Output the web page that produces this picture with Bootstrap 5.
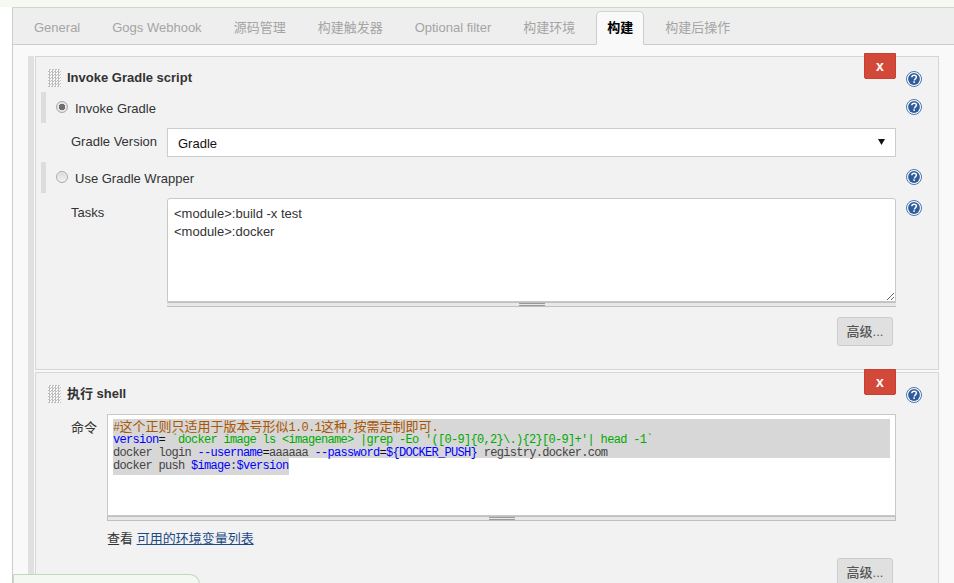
<!DOCTYPE html>
<html lang="zh">
<head>
<meta charset="utf-8">
<title>Jenkins 构建</title>
<link rel="stylesheet" href="https://cdn.jsdelivr.net/npm/bootstrap@5.3.0/dist/css/bootstrap.min.css">
<style>
html,body{height:583px;overflow:hidden}
body{background:#fff;font:13px/16px "Liberation Sans","Noto Sans CJK SC",sans-serif;color:#333;position:relative}
.top-strip{height:7px;background:#f6f9f1;border-bottom:0}
.cfg-main{margin-left:12px;border-left:1px solid #ccc;border-top:1px solid #d4d4d4;background:#f9f9f9;height:576px;overflow:hidden}
.cfg-tabs.nav-tabs{background:#eee;height:37px;padding:3px 0 0 10px;gap:10px;border-bottom:1px solid #ccc;--bs-nav-tabs-border-color:#ccc}
.cfg-tabs .nav-link{padding:0 10px;height:34px;line-height:31px;color:#a5a5a5;font-size:13px;border:1px solid transparent;border-radius:5px 5px 0 0;margin-bottom:-1px}
.cfg-tabs .nav-link.active{background:#f9f9f9;color:#000;font-weight:700;border-color:#d4d4d4 #ccc #f9f9f9}
.cfg-wrap{margin:11px 15px 0 15px;border-left:6px solid #e0e0e0;padding-left:1px}
.cfg-panel{background:#f2f2f2;border:1px solid #d6d6d6;position:relative}
.cfg-panel+.cfg-panel{margin-top:2px}
.panel-one{height:314px}
.panel-two{height:260px}
.head-row{height:35px;padding:12px 16px 0 12px}
.panel-two .head-row{height:41px;padding-top:12px}
.drag-grip{width:13px;height:18px;flex:none;background:repeating-conic-gradient(#bdbdbd 0 25%,#fbfbfb 0 50%) 0 0/3px 3px;margin-right:6px}
.head-title{font-weight:700;color:#333;line-height:17px}
.help-ico{width:16px;height:16px;flex:none;display:block}
.head-row .help-ico{margin-top:2px}
.radio-row .help-ico{margin-bottom:2px}
.radio-row{height:31px;margin-left:5px;border-left:5px solid #ddd;padding:0 16px 0 10px}
.radio-text{padding-top:2px}
.cfg-radio.form-check-input{width:12px;height:12px;margin:0 7px 2px 0;flex:none;background:linear-gradient(#d8d8d8,#f4f4f4);border:1px solid #a9a9a9;box-shadow:inset 0 0 0 1px #eee}
.cfg-radio.form-check-input:checked{background:#e4e4e4;border-color:#a9a9a9;box-shadow:none;background-image:radial-gradient(circle,#6f6f6f 0 3px,#e6e6e6 3.5px)}
.field-row{padding:0 16px 0 35px}
.field-label{width:96px;flex:none;color:#333}
.sel-row{height:39px;padding-top:5px}
.cfg-select.form-select{width:729px;height:29px;padding:2px 0 0 10px;font-size:13px;line-height:25px;color:#111;border:1px solid #ccc;border-radius:0;background-color:#fff;background-image:url("data:image/svg+xml,%3Csvg xmlns='http://www.w3.org/2000/svg' width='8' height='6'%3E%3Cpath d='M0 0h7l-3.500 6z' fill='%23111'/%3E%3C/svg%3E");background-position:right 9px top 10px;background-size:8px 6px;box-shadow:none}
.sel-row .field-label{padding-top:6px}
.task-row{padding-top:5px;height:114px}
.task-row .field-label{padding-top:7px}
.box-col{width:729px;flex:none}
.task-area.form-control{display:block;height:104px;padding:6px;font-size:13px;line-height:18px;color:#333;border:1px solid #c8c8c8;border-radius:3px 3px 0 0;background:#fff;box-shadow:none}
.drag-bar{height:5px;background:#e8e8e8;border:1px solid #c0c0c0;border-top-width:1px;position:relative}
.drag-bar::after{content:"";display:block;width:26px;height:3px;margin:0 auto;border-top:1px solid #999;border-bottom:1px solid #999}
.task-bar{border-left:0;border-right:0}
.task-help{margin:2px 0 0 10px}
.adv-btn.btn{width:56px;height:29px;padding:0;font-size:13px;line-height:27px;color:#555;font-weight:500;background:#e0e0e0;border:1px solid #ccc;border-radius:3px}
.adv-row{padding:10px 45px 0 0}
.kill-btn.btn{position:absolute;right:42px;top:-4px;width:32px;height:26px;padding:0;font-size:14px;line-height:21px;font-weight:700;color:#fff;background:#d24939;border:1px solid #c8402f;border-radius:0 0 2px 2px}
.shell-row{padding:0 16px 0 35px}
.shell-label{width:36px;flex:none;padding-top:6px}
.shell-col{width:789px;flex:none}
.code-box{height:102px;background:#fff;border:1px solid #c8c8c8;padding:4px 5px 0}
.code-line{display:block;height:13px;background:#d7d7d7;white-space:pre;font:12px/17px "Liberation Mono","Noto Sans CJK SC",monospace;letter-spacing:-.7px;color:#444}
.code-short{display:table}
.code-line b{font-weight:400}
.c-cm{color:#a50;line-height:15px}
.c-cm i{font:13px/13px "Noto Sans CJK SC",sans-serif;letter-spacing:0}
.c-var{color:#00f}
.c-str{color:#0a0}
.c-eq{color:#111}
.env-note{padding:10px 0 0 0;line-height:16px}
.env-note a{color:#204a87}
.adv-two{padding:11px 45px 0 0}
.side-tab{position:absolute;left:13px;bottom:-1px;width:187px;height:10px;background:#f3f8f1;border:1px solid #bcd9c4;border-bottom:0;border-radius:0 14px 0 0;border-left-color:#c8d8cc}
</style>
</head>
<body>
<svg width="0" height="0" class="position-absolute">
  <symbol id="q" viewBox="0 0 16 16">
    <circle cx="8" cy="8" r="7.5" fill="#fff" stroke="#4a76ad" stroke-width="1"/>
    <circle cx="8" cy="8" r="5.900" fill="#2f5c9b"/>
    <path d="M5.800 6.300C5.900 4.900 6.800 4.200 8.100 4.200c1.400 0 2.300.8 2.300 1.900 0 1-.6 1.400-1.200 1.900-.5.400-.8.700-.8 1.400" fill="none" stroke="#fff" stroke-width="1.500"/>
    <rect x="7.300" y="10.300" width="1.600" height="1.600" fill="#fff"/>
  </symbol>
</svg>
<div class="top-strip"></div>
<div class="cfg-main">
  <ul class="nav nav-tabs cfg-tabs">
    <li class="nav-item"><a class="nav-link" href="#">General</a></li>
    <li class="nav-item"><a class="nav-link" href="#">Gogs Webhook</a></li>
    <li class="nav-item"><a class="nav-link" href="#">源码管理</a></li>
    <li class="nav-item"><a class="nav-link" href="#">构建触发器</a></li>
    <li class="nav-item"><a class="nav-link" href="#">Optional filter</a></li>
    <li class="nav-item"><a class="nav-link" href="#">构建环境</a></li>
    <li class="nav-item"><a class="nav-link active" href="#">构建</a></li>
    <li class="nav-item"><a class="nav-link" href="#">构建后操作</a></li>
  </ul>
  <div class="cfg-wrap">
    <div class="cfg-panel panel-one">
      <button class="btn kill-btn" type="button">x</button>
      <div class="head-row d-flex align-items-start">
        <span class="drag-grip"></span>
        <span class="head-title flex-grow-1">Invoke Gradle script</span>
        <svg class="help-ico"><use href="#q"/></svg>
      </div>
      <div class="radio-row d-flex align-items-center">
        <input class="form-check-input cfg-radio" type="radio" name="g" checked>
        <span class="flex-grow-1 radio-text">Invoke Gradle</span>
        <svg class="help-ico"><use href="#q"/></svg>
      </div>
      <div class="field-row sel-row d-flex">
        <span class="field-label">Gradle Version</span>
        <select class="form-select cfg-select"><option>Gradle</option></select>
      </div>
      <div class="radio-row d-flex align-items-center">
        <input class="form-check-input cfg-radio" type="radio" name="g">
        <span class="flex-grow-1 radio-text">Use Gradle Wrapper</span>
        <svg class="help-ico"><use href="#q"/></svg>
      </div>
      <div class="field-row task-row d-flex">
        <span class="field-label">Tasks</span>
        <div class="box-col">
          <textarea class="form-control task-area" spellcheck="false">&lt;module&gt;:build -x test
&lt;module&gt;:docker</textarea>
          <div class="drag-bar task-bar"></div>
        </div>
        <svg class="help-ico task-help"><use href="#q"/></svg>
      </div>
      <div class="adv-row d-flex justify-content-end">
        <button class="btn adv-btn" type="button">高级...</button>
      </div>
    </div>
    <div class="cfg-panel panel-two">
      <button class="btn kill-btn" type="button">x</button>
      <div class="head-row d-flex align-items-start">
        <span class="drag-grip"></span>
        <span class="head-title flex-grow-1">执行 shell</span>
        <svg class="help-ico"><use href="#q"/></svg>
      </div>
      <div class="shell-row d-flex">
        <span class="shell-label">命令</span>
        <div class="shell-col">
          <div class="code-box">
            <span class="code-line c-cm">#<i>这个正则只适用于版本号形似</i>1.0.1<i>这种</i>,<i>按需定制即可</i>.</span>
            <span class="code-line"><b class="c-var">version</b><b class="c-eq">=</b> <b class="c-str">`docker image ls &lt;imagename&gt; |grep -Eo '([0-9]{0,2}\.){2}[0-9]+'| head -1`</b></span>
            <span class="code-line">docker login <b class="c-var">--username</b><b class="c-eq">=</b>aaaaaa <b class="c-var">--password</b><b class="c-eq">=</b><b class="c-var">${DOCKER_PUSH}</b> registry.docker.com</span>
            <span class="code-line code-short">docker push <b class="c-var">$image</b>:<b class="c-var">$version</b></span>
          </div>
          <div class="drag-bar"></div>
          <div class="env-note">查看 <a href="#">可用的环境变量列表</a></div>
        </div>
      </div>
      <div class="adv-two d-flex justify-content-end">
        <button class="btn adv-btn" type="button">高级...</button>
      </div>
    </div>
  </div>
</div>
<div class="side-tab"></div>
<script src="https://cdn.jsdelivr.net/npm/bootstrap@5.3.0/dist/js/bootstrap.bundle.min.js"></script>
</body>
</html>
